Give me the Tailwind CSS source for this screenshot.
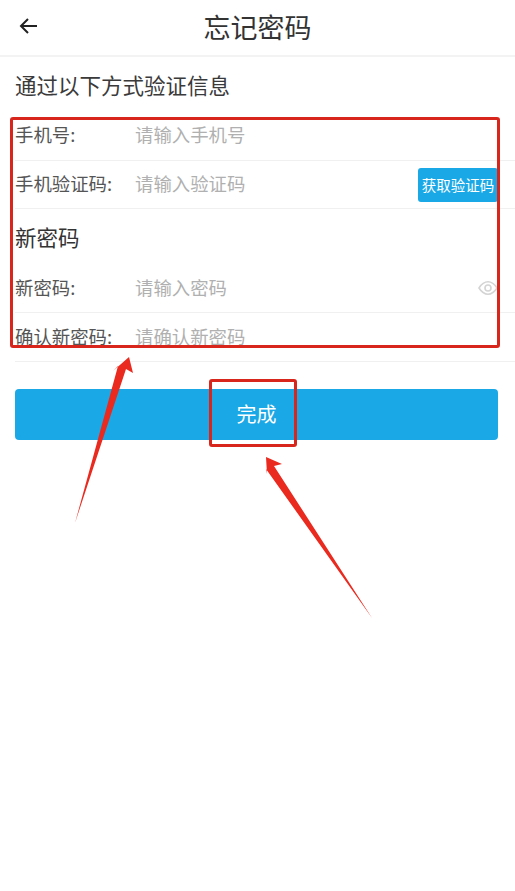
<!DOCTYPE html>
<html lang="zh">
<head>
    <meta charset="UTF-8">
    <meta name="viewport" content="width=device-width, initial-scale=1.0">
    <title>忘记密码</title>
    <script src="https://cdn.jsdelivr.net/npm/@tailwindcss/browser@4"></script>
</head>
<body class="bg-white font-['Noto_Sans_CJK_SC',sans-serif]">
    <div class="relative w-[515px] h-[891px] overflow-hidden">
        <!-- 顶部导航 -->
        <header class="relative h-[57px] flex items-center justify-center border-b-2 border-[#f3f3f3]">
            <svg class="absolute left-[19px] top-[17px] w-[19px] h-[18px] text-[#222]" viewBox="0 0 19 18" fill="none" stroke="currentColor" stroke-width="2">
                <path d="M18 9H2M9 2L2 9l7 7"/>
            </svg>
            <h1 class="text-[27px] text-[#333]">忘记密码</h1>
        </header>

        <p class="h-[55px] pl-[15px] pt-[12px] text-[21.5px] leading-[32px] text-[#3a3a3a]">通过以下方式验证信息</p>

        <div class="pl-[15px] text-[18.4px] text-[#555]">
            <div class="h-[49px] pb-[2px] flex items-center border-b border-[#f0f0f0]">
                <span class="w-[120px]">手机号:</span>
                <span class="text-[#b0b0b0]">请输入手机号</span>
            </div>
            <div class="h-[48px] pb-[2px] flex items-center border-b border-[#f0f0f0]">
                <span class="w-[120px]">手机验证码:</span>
                <span class="text-[#b0b0b0]">请输入验证码</span>
                <button class="ml-auto mr-[17px] mt-[2px] w-[80px] h-[34px] rounded-[3px] bg-[#1ba8e6] text-white text-[14.5px] whitespace-nowrap">获取验证码</button>
            </div>
            <h2 class="h-[55px] pt-[11px] text-[21.5px] leading-[34px] text-[#333]">新密码</h2>
            <div class="h-[49px] flex items-center border-b border-[#f0f0f0]">
                <span class="w-[120px]">新密码:</span>
                <span class="text-[#b0b0b0]">请输入密码</span>
                <svg class="ml-auto mr-[17px] w-[20px] h-[16px] text-[#d4d4d4]" viewBox="0 0 20 16" fill="none" stroke="currentColor" stroke-width="1.6">
                    <path d="M1 8c2.500-4 5.500-6.200 9-6.200S16.500 4 19 8c-2.500 4-5.500 6.200-9 6.200S3.500 12 1 8z"/>
                    <circle cx="10" cy="8" r="3"/>
                </svg>
            </div>
            <div class="h-[49px] flex items-center border-b border-[#f0f0f0]">
                <span class="w-[120px]">确认新密码:</span>
                <span class="text-[#b0b0b0]">请确认新密码</span>
            </div>
        </div>

        <button class="block ml-[15px] mt-[27px] w-[483px] h-[51px] pb-[2px] rounded-[4px] bg-[#1ba8e6] text-white text-[20px]">完成</button>

        <!-- 截图上的红色标注 -->
        <div class="absolute left-[10px] top-[117px] w-[490px] h-[231px] rounded-[3px] border-[3px] border-[#d9261c]"></div>
        <div class="absolute left-[209px] top-[379px] w-[88px] h-[68px] rounded-[3px] border-[3px] border-[#d9261c]"></div>
        <svg class="absolute left-0 top-0 w-[515px] h-[891px] pointer-events-none" viewBox="0 0 515 891" fill="#ea2a1e">
            <path d="M129 357L133 373L126 369L75 523L118 366L113 371Z"/>
            <path d="M266 457L282 464L274 466L372 618L266 469L267 474Z"/>
        </svg>
    </div>
</body>
</html>
